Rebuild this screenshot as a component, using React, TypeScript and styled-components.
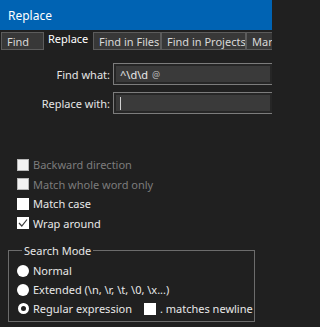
import React from 'react';
import styled, { createGlobalStyle } from 'styled-components';

const GlobalStyle = createGlobalStyle`
  html, body {
    margin: 0;
    padding: 0;
    background: #202020;
    overflow: hidden;
  }
  body {
    font-family: "Noto Sans", "Open Sans", sans-serif;
    font-size: 11px;
    color: #e6e6e6;
  }
`;

const Dialog = styled.div`
  width: 272px;
  height: 327px;
  display: flex;
  flex-direction: column;
  background: #202020;
  overflow: hidden;
`;

const TitleBar = styled.div`
  height: 30px;
  flex: none;
  display: flex;
  align-items: center;
  padding-left: 8px;
  background: #0063b3;
  color: #ffffff;
  font-size: 12px;
`;

const TabBar = styled.div`
  display: flex;
  align-items: flex-end;
  height: 18px;
  margin-top: 2px;
  padding-left: 1px;
  flex: none;
  white-space: nowrap;
`;

const Tab = styled.div<{ $active?: boolean; $w: number }>`
  flex: none;
  width: ${({ $w }) => $w}px;
  height: ${({ $active }) => ($active ? 20 : 18)}px;
  box-sizing: border-box;
  padding-left: ${({ $active }) => ($active ? 4 : 5)}px;
  padding-top: ${({ $active }) => ($active ? 0 : 1)}px;
  background: ${({ $active }) => ($active ? '#202020' : '#383838')};
  border: 1px solid ${({ $active }) => ($active ? 'transparent' : '#5c5c5c')};
  border-left-width: ${({ $active }) => ($active ? 0 : 1)}px;
  color: ${({ $active }) => ($active ? '#ffffff' : '#d8d8d8')};
  line-height: 15px;
  overflow: hidden;
`;

const Form = styled.div`
  display: grid;
  grid-template-columns: 110px 1fr;
  column-gap: 3px;
  row-gap: 7px;
  padding-top: 13px;
`;

const FieldLabel = styled.div`
  text-align: right;
  align-self: center;
  color: #e6e6e6;
`;

const Field = styled.div`
  height: 22px;
  box-sizing: border-box;
  border: 1px solid #7c7c7c;
  border-right: none;
  background: #3a3a3a;
  box-shadow: inset 0 0 0 2px #262626;
  display: flex;
  align-items: center;
  padding-left: 6px;
  color: #e8e8e8;
  white-space: nowrap;
`;

const Mark = styled.span`
  font-size: 9px;
  color: #b8b8b8;
  margin-left: 4px;
`;

const Caret = styled.span`
  width: 1px;
  height: 13px;
  background: #d0d0d0;
`;

const Options = styled.div`
  display: flex;
  flex-direction: column;
  padding: 41px 0 0 17px;
`;

const OptionRow = styled.div<{ $disabled?: boolean }>`
  display: flex;
  align-items: center;
  gap: 4px;
  height: 19.5px;
  color: ${({ $disabled }) => ($disabled ? '#7c7c7c' : '#e8e8e8')};
  white-space: nowrap;
`;

const Box = styled.span<{ $disabled?: boolean }>`
  flex: none;
  width: 12px;
  height: 12px;
  box-sizing: border-box;
  background: ${({ $disabled }) => ($disabled ? '#f2f2f2' : '#ffffff')};
  border: 1px solid ${({ $disabled }) => ($disabled ? '#b8b8b8' : '#ffffff')};
  display: flex;
  align-items: center;
  justify-content: center;
`;

const Group = styled.fieldset`
  margin: 11px 0 0 8px;
  width: 247px;
  box-sizing: border-box;
  border: 1px solid #6c6c6c;
  padding: 4px 0 3px 8px;
  min-width: 0;
`;

const Legend = styled.legend`
  padding: 0 2px;
  margin-left: 5px;
  color: #e6e6e6;
  line-height: 13px;
`;

const RadioRow = styled.div`
  display: flex;
  align-items: center;
  gap: 4px;
  height: 19px;
  color: #e8e8e8;
  white-space: nowrap;
`;

const Radio = styled.span<{ $checked?: boolean }>`
  flex: none;
  width: 12px;
  height: 12px;
  display: flex;
  align-items: center;
  justify-content: center;

  &::before {
    content: '';
    box-sizing: border-box;
    width: ${({ $checked }) => ($checked ? 11 : 12)}px;
    height: ${({ $checked }) => ($checked ? 11 : 12)}px;
    border-radius: 50%;
    background: ${({ $checked }) => ($checked ? '#202020' : '#ffffff')};
    border: ${({ $checked }) => ($checked ? '3px solid #ffffff' : 'none')};
  }
`;

const Spacer = styled.span`
  width: 4px;
`;

function Check() {
  return (
    <svg width="10" height="10" viewBox="0 0 10 10">
      <path d="M1 5 L3.8 8 L9 1.5" fill="none" stroke="#3a3a3a" strokeWidth="1.2" />
    </svg>
  );
}

export default function App() {
  return (
    <Dialog>
      <GlobalStyle />
      <TitleBar>Replace</TitleBar>

      <TabBar>
        <Tab $w={43}>Find</Tab>
        <Tab $active $w={49}>Replace</Tab>
        <Tab $w={68}>Find in Files</Tab>
        <Tab $w={85}>Find in Projects</Tab>
        <Tab $w={40}>Mark</Tab>
      </TabBar>

      <Form>
        <FieldLabel>Find what:</FieldLabel>
        <Field>
          ^\d\d<Mark>@</Mark>
        </Field>
        <FieldLabel>Replace with:</FieldLabel>
        <Field>
          <Caret />
        </Field>
      </Form>

      <Options>
        <OptionRow $disabled>
          <Box $disabled />
          Backward direction
        </OptionRow>
        <OptionRow $disabled>
          <Box $disabled />
          Match whole word only
        </OptionRow>
        <OptionRow>
          <Box />
          Match case
        </OptionRow>
        <OptionRow>
          <Box>
            <Check />
          </Box>
          Wrap around
        </OptionRow>
      </Options>

      <Group>
        <Legend>Search Mode</Legend>
        <RadioRow>
          <Radio />
          Normal
        </RadioRow>
        <RadioRow>
          <Radio />
          Extended (\n, \r, \t, \0, \x...)
        </RadioRow>
        <RadioRow>
          <Radio $checked />
          Regular expression
          <Spacer />
          <Box />
          . matches newline
        </RadioRow>
      </Group>
    </Dialog>
  );
}
